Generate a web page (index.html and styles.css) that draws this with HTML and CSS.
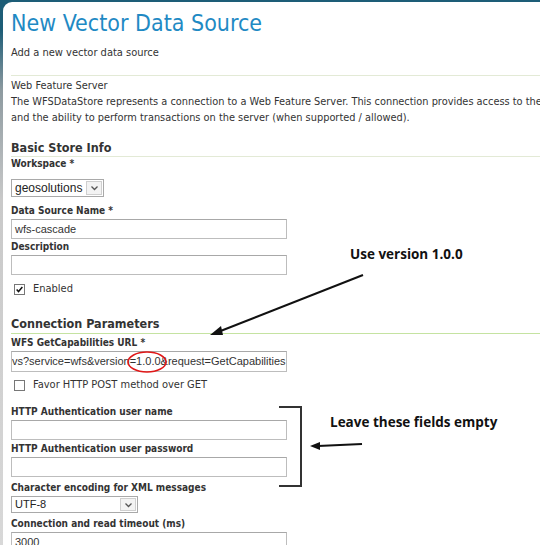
FILE: index.html
```html
<!DOCTYPE html>
<html>
<head>
<meta charset="utf-8">
<link rel="stylesheet" href="styles.css">
</head>
<body>
<div class="frame">
  <div class="panel">
    <h1 class="title">New Vector Data Source</h1>
    <p class="sub">Add a new vector data source</p>
    <div class="rule"></div>
    <div class="desc">
      <div>Web Feature Server</div>
      <div>The WFSDataStore represents a connection to a Web Feature Server. This connection provides access to the Features published by the server,</div>
      <div>and the ability to perform transactions on the server (when supported / allowed).</div>
    </div>

    <h2 class="section">Basic Store Info</h2>
    <div class="label l-ws">Workspace *</div>
    <div class="select ws"><span class="sel-text">geosolutions</span><span class="sel-btn"><svg width="9" height="6" viewBox="0 0 9 6"><path d="M1.5 1.5 L4.5 4.5 L7.5 1.5" fill="none" stroke="#555" stroke-width="1.3"/></svg></span></div>
    <div class="label l-name">Data Source Name *</div>
    <div class="input">wfs-cascade</div>
    <div class="label l-desc">Description</div>
    <div class="input"></div>
    <div class="check-row"><span class="box"><svg width="11" height="11" viewBox="0 0 11 11"><path d="M2 5.5 L4.3 8 L9 2.5" fill="none" stroke="#111" stroke-width="1.8"/></svg></span><span>Enabled</span></div>

    <h2 class="section s2">Connection Parameters</h2>
    <div class="label l-url">WFS GetCapabilities URL *</div>
    <div class="input url">vs?service=wfs&amp;version=1.0.0&amp;request=GetCapabilities</div>
    <div class="check-row c2"><span class="box"></span><span>Favor HTTP POST method over GET</span></div>
    <div class="label l-user">HTTP Authentication user name</div>
    <div class="input"></div>
    <div class="label l-pass">HTTP Authentication user password</div>
    <div class="input"></div>
    <div class="label l-enc">Character encoding for XML messages</div>
    <div class="select enc"><span class="sel-text">UTF-8</span><span class="sel-btn"><svg width="9" height="6" viewBox="0 0 9 6"><path d="M1.5 1.5 L4.5 4.5 L7.5 1.5" fill="none" stroke="#555" stroke-width="1.3"/></svg></span></div>
    <div class="label l-time">Connection and read timeout (ms)</div>
    <div class="input">3000</div>
  </div>

  <svg class="annot" width="540" height="545" viewBox="0 0 540 545">
    <ellipse cx="147" cy="362" rx="19" ry="10" fill="none" stroke="#e01818" stroke-width="1.6"/>
    <line x1="363" y1="275" x2="218" y2="332" stroke="#111" stroke-width="2"/>
    <path d="M210 335 L221 326 L223 335 Z" fill="#111"/>
    <polyline points="279,407 301,407 301,486 279,486" fill="none" stroke="#333" stroke-width="2"/>
    <line x1="362" y1="444" x2="318" y2="446" stroke="#111" stroke-width="1.8"/>
    <path d="M310 446 L320 442 L320 450 Z" fill="#111"/>
  </svg>
  <div class="note n1">Use version 1.0.0</div>
  <div class="note n2">Leave these fields empty</div>
</div>
</body>
</html>
```

FILE: styles.css
```css
html, body {
  margin: 0;
  padding: 0;
  width: 540px;
  height: 545px;
  overflow: hidden;
  background: #fff;
}

.frame {
  position: relative;
  width: 540px;
  height: 545px;
  box-sizing: border-box;
  padding: 2px 0 0 3px;
  background: linear-gradient(to bottom, #1d5d77 0px, #1d5d77 30px, #8d9aa0 90px, #c9c9c9 200px, #d8d8d8 545px);
  font-family: "DejaVu Sans Condensed", "DejaVu Sans", sans-serif;
  color: #333;
}

.panel {
  background: #fff;
  height: 100%;
  border-top-left-radius: 9px;
  padding: 0 0 0 8px;
  box-sizing: border-box;
  overflow: hidden;
}

.title {
  margin: 0;
  padding-top: 6px;
  font-family: "DejaVu Sans Condensed", "DejaVu Sans", sans-serif;
  font-weight: normal;
  font-size: 23px;
  line-height: 30px;
  color: #1f8ac4;
}

.sub {
  margin: 8px 0 0 0;
  font-size: 11px;
  line-height: 14px;
  color: #333;
}

.rule {
  height: 1px;
  background: #e3ead6;
  margin-top: 15px;
}

.desc {
  margin-top: 2px;
  font-size: 10.9px;
  line-height: 16px;
  white-space: nowrap;
  color: #333;
}

.section {
  margin: 14px 0 0 0;
  font-size: 12.5px;
  font-weight: bold;
  line-height: 16px;
  color: #333;
  border-bottom: 1px solid #e3ead6;
}

.section.s2 {
  margin-top: 20px;
  border-bottom-color: #c5e3a1;
  padding-bottom: 1px;
}

.label {
  font-size: 10px;
  font-weight: bold;
  line-height: 12px;
  margin-top: 2px;
  color: #333;
}

.input {
  width: 276px;
  height: 20px;
  box-sizing: border-box;
  border: 1px solid #bdbdbd;
  border-top-color: #a8a8a8;
  margin-top: 2px;
  font-family: "Liberation Sans", Arial, sans-serif;
  font-size: 11px;
  line-height: 18px;
  padding-left: 3px;
  color: #333;
  white-space: nowrap;
  overflow: hidden;
}

.input.url {
  height: 21px;
  line-height: 19px;
  padding-left: 0;
  font-size: 11px;
}

.select {
  display: flex;
  align-items: stretch;
  box-sizing: border-box;
  border: 1px solid #a9a9a9;
  height: 18px;
  font-family: "Liberation Sans", Arial, sans-serif;
  font-size: 11px;
  line-height: 16px;
  color: #222;
}

.select.ws {
  width: 93px;
  margin-top: 9px;
  font-size: 12px;
}

.select.enc {
  width: 127px;
  height: 17px;
  line-height: 15px;
  margin-top: 2px;
}

.sel-text {
  flex: 1;
  padding-left: 3px;
  white-space: nowrap;
  overflow: hidden;
}

.sel-btn {
  width: 14px;
  margin: 1px;
  border: 1px solid #cfcfcf;
  background: #f3f3f3;
  display: flex;
  align-items: center;
  justify-content: center;
}

.l-ws { margin-top: 1px; }
.l-name { margin-top: 8px; }
.l-desc { margin-top: 2px; }
.l-url { margin-top: 3px; }
.l-user { margin-top: 14px; }
.l-pass { margin-top: 3px; }
.l-enc { margin-top: 5px; }
.l-time { margin-top: 5px; }

.check-row {
  display: flex;
  align-items: center;
  gap: 8px;
  margin-top: 7px;
  padding-left: 3px;
  font-size: 11px;
  line-height: 14px;
  color: #333;
}

.check-row.c2 { margin-top: 6px; }

.box {
  width: 11px;
  height: 11px;
  box-sizing: border-box;
  border: 1px solid #777;
  background: #fff;
  display: flex;
  align-items: center;
  justify-content: center;
}

.box svg { display: block; }

.annot {
  position: absolute;
  left: 0;
  top: 0;
  pointer-events: none;
}

.note {
  position: absolute;
  font-family: "Open Sans", "Noto Sans", sans-serif;
  font-weight: bold;
  font-size: 13.5px;
  line-height: 16px;
  color: #111;
  white-space: nowrap;
}

.n1 { left: 350px; top: 246px; }
.n2 { left: 330px; top: 414px; }
```
